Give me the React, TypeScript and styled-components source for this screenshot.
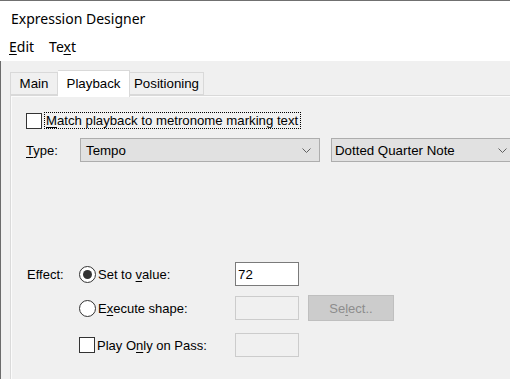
import React from "react";
import styled, { createGlobalStyle } from "styled-components";

const Global = createGlobalStyle`
  html, body { margin: 0; padding: 0; background: #f0f0f0; }
  body { width: 510px; height: 379px; overflow: hidden; }
  * { box-sizing: border-box; }
`;

const Win = styled.div`
  width: 510px;
  height: 379px;
  display: flex;
  flex-direction: column;
  background: #fff;
  border-top: 1px solid #707070;
  overflow: hidden;
`;

const TitleBar = styled.div`
  height: 36px;
  padding: 8px 0 0 11px;
  font-family: "Noto Sans", "Open Sans", sans-serif;
  font-size: 14px;
  color: #000;
  background: #fff;
  line-height: 20px;
`;

const MenuBar = styled.div`
  height: 24px;
  display: flex;
  gap: 15px;
  padding: 0 0 0 9px;
  font-family: "Noto Sans", "Open Sans", sans-serif;
  font-size: 14px;
  line-height: 20px;
  color: #000;
  background: #fff;
`;

const U = styled.span`
  text-decoration: underline;
  text-underline-offset: 2px;
  text-decoration-thickness: 1px;
`;

const Client = styled.div`
  flex: 1;
  background: #f0f0f0;
  border-left: 1px solid #6b6b6b;
  padding: 9px 0 0 9px;
  display: flex;
  flex-direction: column;
  font-family: "Liberation Sans", Arial, sans-serif;
  font-size: 13px;
  color: #000;
`;

const TabRow = styled.div`
  display: flex;
  align-items: flex-end;
  height: 25px;
  position: relative;
  z-index: 1;
`;

const Tab = styled.div<{ $w: number; $active?: boolean }>`
  width: ${(p) => p.$w}px;
  height: ${(p) => (p.$active ? 27 : 23)}px;
  margin-bottom: ${(p) => (p.$active ? -2 : 0)}px;
  background: ${(p) => (p.$active ? "#ffffff" : "#f0f0f0")};
  border: 1px solid #d9d9d9;
  border-bottom: ${(p) => (p.$active ? "none" : "1px solid #d9d9d9")};
  display: flex;
  align-items: ${(p) => (p.$active ? "flex-start" : "center")};
  padding-top: ${(p) => (p.$active ? 5 : 0)}px;
  justify-content: center;
  font-size: 13.3px;
  & + & { border-left: none; }
`;

const Panel = styled.div`
  flex: 1;
  background: #f0f0f0;
  border-top: 1px solid #d9d9d9;
  border-left: 1px solid #dadada;
  box-shadow: inset 1px 1px 0 #fbfbfb;
  padding: 16px 0 0 15px;
  display: flex;
  flex-direction: column;
`;

const CheckRow = styled.div`
  display: flex;
  align-items: center;
  gap: 2px;
  height: 17px;
`;

const Box = styled.div`
  width: 16px;
  height: 16px;
  border: 1px solid #333;
  background: #fff;
  flex: none;
`;

const Focus = styled.span`
  border: 1px dotted #000;
  padding: 0 2px 0 1px;
  line-height: 15px;
  height: 17px;
  white-space: nowrap;
  font-size: 13.2px;
`;

const TypeRow = styled.div`
  margin-top: 9px;
  display: flex;
  align-items: center;
  height: 24px;
`;

const Label = styled.span<{ $w: number }>`
  width: ${(p) => p.$w}px;
  flex: none;
  white-space: nowrap;
`;

const Combo = styled.div<{ $w: number; $pad: number }>`
  width: ${(p) => p.$w}px;
  height: 24px;
  margin-right: 11px;
  background: #e1e1e1;
  border: 1px solid #adadad;
  display: flex;
  align-items: center;
  justify-content: space-between;
  padding: 0 8px 0 ${(p) => p.$pad}px;
  flex: none;
  white-space: nowrap;
  font-size: 13.3px;
`;

const Chevron = () => (
  <svg width="9" height="5" viewBox="0 0 9 5">
    <path d="M0.5 0.5 L4.5 4.5 L8.5 0.5" fill="none" stroke="#606060" strokeWidth="1" />
  </svg>
);

const EffectGrid = styled.div`
  margin-top: 100px;
  margin-left: 1px;
  display: grid;
  grid-template-columns: 52px 156px 64px 95px;
  gap: 0;
  align-items: center;
`;

const Row = styled.div<{ $h: number; $mt: number }>`
  display: contents;
  & > * { margin-top: ${(p) => p.$mt}px; height: ${(p) => p.$h}px; }
`;

const Cell = styled.div`
  display: flex;
  align-items: center;
  white-space: nowrap;
`;

const Choice = styled.div`
  display: flex;
  align-items: center;
  gap: 2px;
  white-space: nowrap;
`;

const Radio = styled.div<{ $on?: boolean }>`
  width: 17px;
  height: 17px;
  border-radius: 50%;
  border: 1px solid #333;
  background: #fff;
  display: flex;
  align-items: center;
  justify-content: center;
  flex: none;
  &::after {
    content: "";
    display: ${(p) => (p.$on ? "block" : "none")};
    width: 9px;
    height: 9px;
    border-radius: 50%;
    background: #333;
  }
`;

const Input = styled.div<{ $disabled?: boolean }>`
  width: 64px;
  height: 24px;
  border: 1px solid ${(p) => (p.$disabled ? "#cccccc" : "#7a7a7a")};
  background: ${(p) => (p.$disabled ? "#f0f0f0" : "#fff")};
  display: flex;
  align-items: center;
  padding-left: 2px;
  font-size: 13.3px;
`;

const Button = styled.div`
  margin-left: 9px;
  width: 86px;
  height: 26px;
  flex: none;
  background: #cccccc;
  border: 1px solid #bfbfbf;
  color: #8d8d8d;
  display: flex;
  align-items: center;
  justify-content: center;
`;

export default function App() {
  return (
    <>
      <Global />
      <Win>
        <TitleBar>Expression Designer</TitleBar>
        <MenuBar>
          <span>
            <U>E</U>dit
          </span>
          <span>
            Te<U>x</U>t
          </span>
        </MenuBar>
        <Client>
          <TabRow>
            <Tab $w={48}>Main</Tab>
            <Tab $w={72} $active>
              Playback
            </Tab>
            <Tab $w={74}>Positioning</Tab>
          </TabRow>
          <Panel>
            <CheckRow>
              <Box />
              <Focus>
                <U>M</U>atch playback to metronome marking text
              </Focus>
            </CheckRow>
            <TypeRow>
              <Label $w={54}>
                <U>T</U>ype:
              </Label>
              <Combo $w={240} $pad={5}>
                <span>Tempo</span>
                <Chevron />
              </Combo>
              <Combo $w={185} $pad={3}>
                <span>Dotted Quarter Note</span>
                <Chevron />
              </Combo>
            </TypeRow>
            <EffectGrid>
              <Row $h={24} $mt={0}>
                <Cell>Effect:</Cell>
                <Choice>
                  <Radio $on />
                  <span>
                    Set to <U>v</U>alue:
                  </span>
                </Choice>
                <Input>72</Input>
                <Cell />
              </Row>
              <Row $h={26} $mt={9}>
                <Cell />
                <Choice>
                  <Radio />
                  <span>
                    E<U>x</U>ecute shape:
                  </span>
                </Choice>
                <Cell>
                  <Input $disabled />
                </Cell>
                <Cell>
                  <Button>
                    Se<U>l</U>ect..
                  </Button>
                </Cell>
              </Row>
              <Row $h={24} $mt={12}>
                <Cell />
                <Choice>
                  <Box />
                  <span>
                    Play O<U>n</U>ly on Pass:
                  </span>
                </Choice>
                <Cell>
                  <Input $disabled />
                </Cell>
                <Cell />
              </Row>
            </EffectGrid>
          </Panel>
        </Client>
      </Win>
    </>
  );
}
